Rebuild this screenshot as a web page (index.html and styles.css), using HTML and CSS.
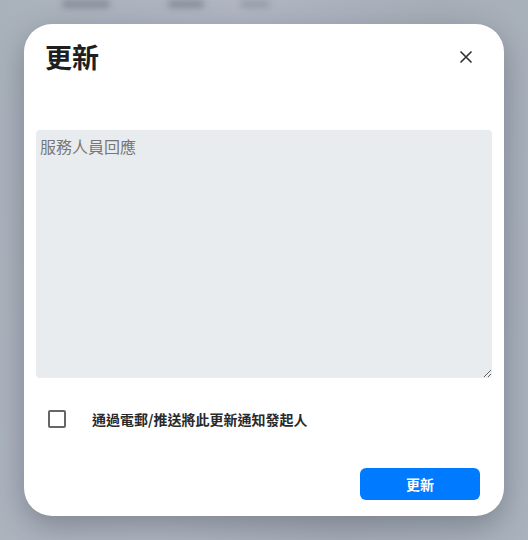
FILE: index.html
```html
<!DOCTYPE html>
<html lang="zh-Hant">
<head>
<meta charset="utf-8">
<link rel="stylesheet" href="styles.css">
</head>
<body>
<div class="backdrop">
  <div class="bg-bar">
    <span class="blob b1"></span><span class="blob b2"></span><span class="blob b3"></span>
  </div>
  <div class="dialog">
    <div class="header">
      <h1 class="title">更新</h1>
      <button class="close" aria-label="close">
        <svg width="14" height="14" viewBox="0 0 14 14"><path d="M2 2 L12 12 M12 2 L2 12" stroke="#333" stroke-width="1.7" stroke-linecap="round"/></svg>
      </button>
    </div>
    <textarea class="reply" placeholder="服務人員回應"></textarea>
    <label class="notify">
      <span class="box"></span>
      <span class="label-text">通過電郵/推送將此更新通知發起人</span>
    </label>
    <div class="footer">
      <button class="submit">更新</button>
    </div>
  </div>
</div>
</body>
</html>
```
FILE: styles.css
```css
html, body {
  margin: 0;
  padding: 0;
}
body {
  width: 528px;
  height: 540px;
  overflow: hidden;
  font-family: "Noto Sans CJK TC", "Noto Sans", sans-serif;
  background: linear-gradient(100deg, #a9b2bb 0%, #b1b6c2 40%, #a7aeb8 70%, #aab3bd 100%);
}
.backdrop {
  position: relative;
  width: 528px;
  height: 540px;
  padding-top: 24px;
  box-sizing: border-box;
  display: flex;
  flex-direction: column;
  align-items: center;
}
.bg-bar {
  position: absolute;
  top: 0;
  left: 0;
  width: 528px;
  height: 14px;
}
.blob {
  position: absolute;
  top: 0;
  height: 8px;
  background: #8a909c;
  filter: blur(3px);
  border-radius: 4px;
}
.b1 { left: 62px; width: 48px; }
.b2 { left: 168px; width: 36px; }
.b3 { left: 240px; width: 30px; opacity: 0.6; }
.dialog {
  position: relative;
  width: 480px;
  height: 492px;
  background: #fff;
  border-radius: 28px;
  box-shadow: 0 10px 30px rgba(40, 45, 60, 0.35);
  box-sizing: border-box;
  padding: 0 12px;
  display: flex;
  flex-direction: column;
}
.header {
  display: flex;
  justify-content: space-between;
  align-items: center;
  padding: 14px 19px 0 9px;
  height: 56px;
  box-sizing: border-box;
}
.title {
  margin: 0;
  font-size: 27px;
  font-weight: 700;
  color: #1e1e1e;
  line-height: 36px;
  margin-top: -4px;
}
.close {
  border: 0;
  background: none;
  padding: 0;
  width: 14px;
  height: 14px;
  display: flex;
  cursor: pointer;
  margin-top: -4px;
}
.reply {
  margin-top: 50px;
  width: 456px;
  height: 248px;
  box-sizing: border-box;
  border: 0;
  border-radius: 4px;
  background: #e9ecef;
  padding: 6px 4px;
  font-family: "Noto Sans CJK TC", "Noto Sans", sans-serif;
  font-size: 16px;
  line-height: 20px;
  color: #333;
  resize: vertical;
  outline: none;
}
.reply::placeholder {
  color: #777;
}
.notify {
  display: flex;
  align-items: center;
  margin-top: 31px;
  padding-left: 12px;
  height: 20px;
}
.box {
  width: 18px;
  height: 18px;
  box-sizing: border-box;
  border: 2px solid #666;
  border-radius: 2px;
  flex: none;
}
.label-text {
  margin-left: 26px;
  font-size: 14px;
  font-weight: 700;
  color: #2a2a2a;
}
.footer {
  display: flex;
  justify-content: flex-end;
  margin-top: 39px;
  padding-right: 12px;
}
.submit {
  width: 120px;
  height: 32px;
  border: 0;
  border-radius: 6px;
  background: #007bff;
  color: #fff;
  font-family: "Noto Sans CJK TC", "Noto Sans", sans-serif;
  font-size: 14px;
  font-weight: 700;
  cursor: pointer;
}
```
